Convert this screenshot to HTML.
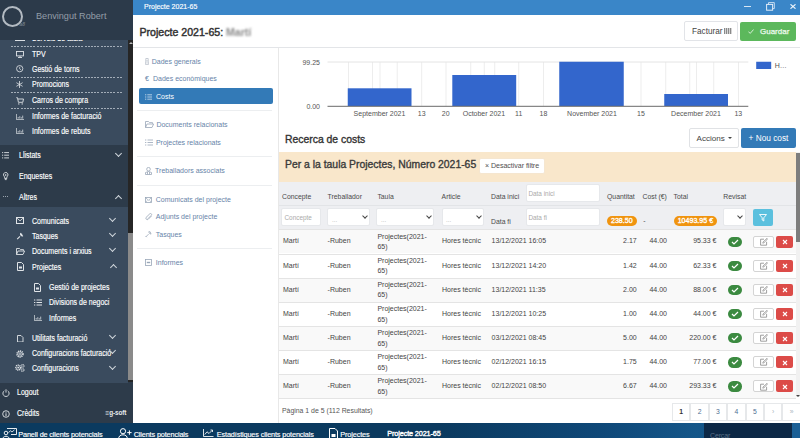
<!DOCTYPE html>
<html><head><meta charset="utf-8">
<style>
*{box-sizing:border-box;margin:0;padding:0}
html,body{width:800px;height:438px;overflow:hidden;background:#fff;font-family:"Liberation Sans",sans-serif;position:relative}
.a{position:absolute;white-space:nowrap}
/* sidebar */
#sb{position:absolute;left:0;top:0;width:133px;height:423px;background:#2d3b4a;overflow:hidden}
#sbh{position:absolute;left:0;top:0;width:133px;height:40px;background:#2c3a4a;z-index:2}
.light{position:absolute;left:0;width:128px;background:#3a4b5e}
.si{position:absolute;color:#fff;font-size:8.3px;-webkit-text-stroke:.15px #fff;white-space:nowrap;transform:translateY(-50%) scaleX(.845);transform-origin:0 50%}
.dash{position:absolute;left:11px;width:111px;height:1px;background:repeating-linear-gradient(90deg,#a3adb8 0 2px,transparent 2px 3.2px)}
.chev{position:absolute;margin-top:-1px;width:5px;height:5px;border-right:1.2px solid #d0d6dc;border-bottom:1.2px solid #d0d6dc;transform:rotate(45deg)}
.chevu{position:absolute;width:5px;height:5px;border-left:1.2px solid #d0d6dc;border-top:1.2px solid #d0d6dc;transform:rotate(45deg)}
/* content */
#tb{position:absolute;left:133px;top:0;width:667px;height:14.5px;background:#3a86c8}
.nav{position:absolute;margin-top:-0.5px;color:#6783a8;font-size:7px;white-space:nowrap;transform:translateY(-50%)}
.sep{position:absolute;left:137px;width:135px;height:1px;background:#eceef0}
.lbl{position:absolute;color:#555;font-size:6.4px;white-space:nowrap;transform:translateY(-50%)}
.hd{position:absolute;color:#4a4a4a;font-size:6.85px;white-space:nowrap;transform:translateY(-50%)}
.cell{position:absolute;color:#444;font-size:7px;white-space:nowrap;transform:translateY(-50%)}
.inp{position:absolute;background:#fff;border:1px solid #e6e8eb;border-radius:2px}
.row{position:absolute;left:279px;width:517px;border-top:1px solid #e4e4e4}
.chk{position:absolute;width:14px;height:10.4px;border-radius:5.2px;background:#3b8a40}
.edit{position:absolute;width:21px;height:11.8px;border:1px solid #d4d4d4;border-radius:2px;background:#fff}
.del{position:absolute;width:16.8px;height:11.8px;border-radius:2px;background:#dc4b48}
.pg{position:absolute;top:403.4px;height:17.6px;width:18.4px;border:1px solid #e6e8ea;margin-left:-1px;color:#4f6f94;font-size:6.8px;text-align:center;line-height:16px}
.tk{position:absolute;color:#fff;font-size:7.3px;letter-spacing:-0.14px;-webkit-text-stroke:.15px #fff;white-space:nowrap;transform:translateY(-50%)}
</style></head><body>

<!-- SIDEBAR -->
<div id="sb">
  <div class="light" style="top:40px;height:105px"></div>
  <div class="light" style="top:207px;height:175.5px"></div>
  <div id="sbh">
    <div class="a" style="left:2px;top:6px;width:21px;height:21px;border:2.2px solid #b3bac2;border-radius:50%"></div>
    <div class="a" style="left:19.5px;top:20.5px;color:#6f7a86;font-size:5px;font-style:italic;font-weight:bold">a8</div>
    <div class="a" style="left:36.4px;top:15.4px;color:#939da8;font-size:9.6px;transform:translateY(-50%) scaleX(.95);transform-origin:0 50%">Benvingut Robert</div>
  </div>
  <div class="dash" style="top:46px"></div>
  <div class="a" style="left:15px;top:39.6px;width:10px;height:1.4px;background:#d9dde2"></div>
  <div class="si" style="left:31.5px;top:38.3px">Serveis de taula</div>
  <!-- TPV -->
  <svg class="a" style="left:15.6px;top:50.5px" width="8" height="7" viewBox="0 0 8 7"><rect x=".5" y=".5" width="7" height="4.4" fill="none" stroke="#dfe3e7" stroke-width=".9"/><path d="M4 5V6.3M2 6.5H6" stroke="#dfe3e7" stroke-width=".9"/></svg>
  <div class="si" style="left:31.5px;top:53.5px">TPV</div>
  <svg class="a" style="left:16.2px;top:65.4px" width="7.4" height="7.4" viewBox="0 0 8 8"><circle cx="4" cy="4" r="3.4" fill="none" stroke="#dfe3e7" stroke-width=".9"/><path d="M4 2V4.2L5.3 5.2" fill="none" stroke="#dfe3e7" stroke-width=".8"/></svg>
  <div class="si" style="left:31.5px;top:69px">Gestió de torns</div>
  <div class="dash" style="top:77px"></div>
  <svg class="a" style="left:16.3px;top:81px" width="7" height="7" viewBox="0 0 7 7"><path d="M3.5 0V7M.4 1.7L6.6 5.3M.4 5.3L6.6 1.7" stroke="#dfe3e7" stroke-width=".8"/></svg>
  <div class="si" style="left:31.5px;top:84px">Promocions</div>
  <div class="dash" style="top:92px"></div>
  <svg class="a" style="left:15.8px;top:96.6px" width="8" height="8" viewBox="0 0 8 8"><path d="M.3 .7H1.5L2.4 5.3H6.8L7.5 2H1.8" fill="none" stroke="#dfe3e7" stroke-width=".9"/><circle cx="2.8" cy="6.9" r=".7" fill="#dfe3e7"/><circle cx="6.2" cy="6.9" r=".7" fill="#dfe3e7"/></svg>
  <div class="si" style="left:31.5px;top:100.4px">Carros de compra</div>
  <div class="dash" style="top:108px"></div>
  <svg class="a" style="left:15.8px;top:113.5px" width="8" height="6" viewBox="0 0 8 6"><path d="M.4 0V5.6H8M2.2 4.6V3M3.8 4.6V2.2M5.3 4.6V3.2M6.7 4.6V1.6" fill="none" stroke="#dfe3e7" stroke-width=".75"/></svg>
  <div class="si" style="left:31.5px;top:116.4px">Informes de facturació</div>
  <svg class="a" style="left:15.8px;top:128.3px" width="8" height="6" viewBox="0 0 8 6"><path d="M.4 0V5.6H8M2.2 4.6V3M3.8 4.6V2.2M5.3 4.6V3.2M6.7 4.6V1.6" fill="none" stroke="#dfe3e7" stroke-width=".75"/></svg>
  <div class="si" style="left:31.5px;top:131.2px">Informes de rebuts</div>
  <!-- dark section -->
  <svg class="a" style="left:1.8px;top:152px" width="7.5" height="6.5" viewBox="0 0 7.5 6.5"><path d="M0 .6H1.2M0 3.2H1.2M0 5.9H1.2M2.2 .6H7.5M2.2 3.2H7.5M2.2 5.9H7.5" fill="none" stroke="#dfe3e7" stroke-width=".9"/></svg>
  <div class="si" style="left:18.5px;top:155.2px">Llistats</div>
  <div class="chev" style="left:116px;top:151.5px"></div>
  <svg class="a" style="left:3.4px;top:172px" width="5.5" height="9" viewBox="0 0 5.5 9"><path d="M2.75 .5A2.2 2.2 0 0 1 4.4 4.2L3.8 5V6.5H1.7V5L1.1 4.2A2.2 2.2 0 0 1 2.75 .5ZM1.8 7.6H3.7M2.75 2V4" fill="none" stroke="#dfe3e7" stroke-width=".9"/></svg>
  <div class="si" style="left:18.5px;top:176.4px">Enquestes</div>
  <div class="a" style="left:3.4px;top:196px;width:5.5px;height:1px;background:repeating-linear-gradient(90deg,#9aa4ae 0 1px,transparent 1px 2.2px)"></div>
  <div class="si" style="left:18.5px;top:197px">Altres</div>
  <div class="chevu" style="left:116px;top:196px"></div>
  <!-- light submenu -->
  <svg class="a" style="left:16px;top:217px" width="8" height="7" viewBox="0 0 8 7"><rect x=".5" y=".5" width="7" height="6" fill="none" stroke="#dfe3e7" stroke-width="1"/><path d="M.5 .8L4 3.8L7.5 .8" fill="none" stroke="#dfe3e7" stroke-width=".9"/></svg>
  <div class="si" style="left:31.5px;top:220.6px">Comunicats</div>
  <div class="chev" style="left:110px;top:216.5px"></div>
  <svg class="a" style="left:16px;top:231.5px" width="8" height="8" viewBox="0 0 8 8"><path d="M1.2 7.2L4 4.4M4.6 1.4A2 2 0 0 0 6.6 4L5.6 3.2L5.8 2.2L4.8 1.8Z" fill="none" stroke="#dfe3e7" stroke-width="1.1" stroke-linejoin="round"/></svg>
  <div class="si" style="left:31.5px;top:235.9px">Tasques</div>
  <div class="chev" style="left:110px;top:231.5px"></div>
  <svg class="a" style="left:15.5px;top:247.5px" width="9" height="7" viewBox="0 0 9 7"><path d="M.5 6.5V.5H3.5L4.5 1.6H7.5V2.8M.5 6.5L2 3H8.6L7 6.5Z" fill="none" stroke="#dfe3e7" stroke-width=".9"/></svg>
  <div class="si" style="left:31.5px;top:251.2px">Documents i arxius</div>
  <div class="chev" style="left:110px;top:247px"></div>
  <svg class="a" style="left:17px;top:262px" width="7" height="9" viewBox="0 0 7 9"><path d="M.5 .5H4.5L6.5 2.5V8.5H.5Z" fill="none" stroke="#dfe3e7" stroke-width="1"/><rect x="2" y="4.5" width="3" height="2" fill="#dfe3e7"/></svg>
  <div class="si" style="left:31.5px;top:266.5px">Projectes</div>
  <div class="chevu" style="left:111px;top:265px"></div>
  <svg class="a" style="left:34px;top:282.5px" width="7" height="9" viewBox="0 0 7 9"><path d="M.5 .5H4.5L6.5 2.5V8.5H.5Z" fill="none" stroke="#dfe3e7" stroke-width="1"/><rect x="2" y="4.5" width="3" height="2" fill="#dfe3e7"/></svg>
  <div class="si" style="left:49px;top:287.1px">Gestió de projectes</div>
  <svg class="a" style="left:33.5px;top:298.5px" width="8" height="8" viewBox="0 0 8 8"><path d="M0 1H1.3M0 3.5H1.3M0 6H1.3M2.5 1H8M2.5 3.5H8M2.5 6H8" fill="none" stroke="#dfe3e7" stroke-width="1"/></svg>
  <div class="si" style="left:49px;top:302.3px">Divisions de negoci</div>
  <svg class="a" style="left:33.8px;top:314.6px" width="8" height="6" viewBox="0 0 8 6"><path d="M.4 0V5.6H8M2.2 4.6V3M3.8 4.6V2.2M5.3 4.6V3.2M6.7 4.6V1.6" fill="none" stroke="#dfe3e7" stroke-width=".75"/></svg>
  <div class="si" style="left:49px;top:317.5px">Informes</div>
  <svg class="a" style="left:17px;top:334.6px" width="6.5" height="7.5" viewBox="0 0 6.5 7.5"><path d="M.5 .5H4L6 2.5V7H.5Z" fill="none" stroke="#dfe3e7" stroke-width=".9"/></svg>
  <div class="si" style="left:31.5px;top:338.1px">Utilitats facturació</div>
  <div class="chev" style="left:110px;top:334px"></div>
  <svg class="a" style="left:16px;top:349.6px" width="8" height="8" viewBox="0 0 8 8"><circle cx="4" cy="4" r="3" fill="none" stroke="#dfe3e7" stroke-width="1.5" stroke-dasharray="1.2 .75"/><circle cx="4" cy="4" r="2.2" fill="none" stroke="#dfe3e7" stroke-width=".6"/><circle cx="4" cy="4" r="1" fill="none" stroke="#dfe3e7" stroke-width=".7"/></svg>
  <div class="si" style="left:31.5px;top:353.4px">Configuracions facturació</div>
  <div class="chev" style="left:110px;top:349px"></div>
  <svg class="a" style="left:14.8px;top:364.2px" width="10" height="8" viewBox="0 0 10 8"><circle cx="3.2" cy="3.6" r="2.3" fill="none" stroke="#dfe3e7" stroke-width="1.6" stroke-dasharray="1 .55"/><circle cx="3.2" cy="3.6" r=".9" fill="#dfe3e7"/><circle cx="7.6" cy="1.9" r="1.3" fill="none" stroke="#dfe3e7" stroke-width="1.2" stroke-dasharray=".7 .45"/><circle cx="7.6" cy="6" r="1.3" fill="none" stroke="#dfe3e7" stroke-width="1.2" stroke-dasharray=".7 .45"/></svg>
  <div class="si" style="left:31.5px;top:367.8px">Configuracions</div>
  <div class="chev" style="left:110px;top:365px"></div>
  <!-- scrollbar -->
  <div class="a" style="left:127.5px;top:40px;width:5.5px;height:342px;background:#262626"></div>
  <div class="a" style="left:128px;top:233px;width:5px;height:147px;background:#8a8a8a"></div>
  <div class="a" style="left:128.5px;top:42px;width:0;height:0;border-left:2px solid transparent;border-right:2px solid transparent;border-bottom:2px solid #bbb"></div>
  <!-- bottom -->
  <svg class="a" style="left:1.6px;top:389px" width="8" height="8" viewBox="0 0 8 8"><path d="M2.3 1.8A3.1 3.1 0 1 0 5.7 1.8M4 .3V3.6" fill="none" stroke="#dfe3e7" stroke-width=".9"/></svg>
  <div class="si" style="left:16.6px;top:392.1px">Logout</div>
  <svg class="a" style="left:1.6px;top:410px" width="8" height="8" viewBox="0 0 8 8"><circle cx="4" cy="4" r="3.3" fill="none" stroke="#dfe3e7" stroke-width=".9"/><path d="M4 3.3V6.2M4 1.8V2.6" fill="none" stroke="#dfe3e7" stroke-width="1"/></svg>
  <div class="si" style="left:16.6px;top:413.1px">Crèdits</div>
  <div class="a" style="left:105.5px;top:411.8px;color:#e6e9ec;font-size:6.4px;font-weight:bold;letter-spacing:-0.1px;transform:translateY(-50%)">&#x2261;g-soft</div>
</div>

<!-- TITLE BAR -->
<div id="tb">
  <div class="a" style="left:11px;top:6.2px;color:#fff;font-size:7px;-webkit-text-stroke:.15px #fff;transform:translateY(-50%)">Projecte 2021-65</div>
  <div class="a" style="left:611.2px;top:6px;width:6.4px;height:1px;background:#d6e6f5"></div>
  <svg class="a" style="left:632.5px;top:2px" width="9" height="9" viewBox="0 0 9 9"><path d="M2.5 2.3V.6H8.3V6.6H6.6" fill="none" stroke="#d6e6f5" stroke-width=".9"/><rect x=".6" y="2.4" width="6" height="5.8" fill="none" stroke="#e0ecf8" stroke-width="1"/></svg>
  <svg class="a" style="left:656.5px;top:3.8px" width="6" height="5" viewBox="0 0 6 5"><path d="M.5 .3L5.5 4.7M5.5 .3L.5 4.7" fill="none" stroke="#eef5fb" stroke-width="1.1"/></svg>
</div>
<!-- PAGE HEADER -->
<div class="a" style="left:139.5px;top:32.2px;color:#333;font-size:10.6px;-webkit-text-stroke:.45px #333;transform:translateY(-50%)">Projecte 2021-65:</div>
<div class="a" style="left:226px;top:32.2px;color:#8a8a8a;font-size:10.6px;font-weight:bold;filter:blur(1.1px);transform:translateY(-50%)">Martí</div>
<div class="a" style="left:684.3px;top:21.4px;width:53.3px;height:19.3px;border:1px solid #e2e4e8;border-radius:2px;background:#fff"></div>
<div class="a" style="left:692px;top:30.8px;color:#444;font-size:8.2px;transform:translateY(-50%)">Facturar</div>
<div class="a" style="left:724px;top:28.4px;width:7.5px;height:5.6px;background:repeating-linear-gradient(90deg,#8a8a8a 0 1.2px,#d5d5d5 1.2px 1.9px)"></div>
<div class="a" style="left:740.2px;top:21.6px;width:55.9px;height:19.2px;border-radius:2px;background:#5cb85c"></div>
<svg class="a" style="left:747.6px;top:28.5px" width="6" height="5" viewBox="0 0 6 5"><path d="M.4 2.6L2.2 4.4L5.6 .5" fill="none" stroke="#e3f5e3" stroke-width=".9"/></svg>
<div class="a" style="left:760px;top:30.8px;color:#eefaee;font-size:8px;-webkit-text-stroke:.25px #eefaee;transform:translateY(-50%)">Guardar</div>
<div class="a" style="left:133px;top:47px;width:667px;height:1px;background:#e3e5e8"></div>

<!-- LEFT NAV -->
<div class="a" style="left:278px;top:48px;width:1px;height:375px;background:#e8e8e8"></div>
<svg class="a" style="left:144.8px;top:58px" width="4" height="7" viewBox="0 0 4 7"><path d="M.8 .5H3.2V3H.8ZM.6 3.2V6.6H3.4V3.2M2 4.2V5.5" fill="none" stroke="#b0b8c4" stroke-width=".7"/></svg>
<div class="nav" style="left:151.75px;top:61.1px">Dades generals</div>
<div class="nav" style="left:145px;top:78.6px">&#x20AC;</div>
<div class="nav" style="left:153px;top:78.6px">Dades econòmiques</div>
<div class="a" style="left:139.2px;top:88.3px;width:133.5px;height:16px;background:#337ab7;border-radius:2px"></div>
<svg class="a" style="left:145.2px;top:93.5px" width="7" height="6" viewBox="0 0 7 6"><path d="M0 .8H1.3M0 3H1.3M0 5.2H1.3M2.3 .8H7M2.3 3H7M2.3 5.2H7" fill="none" stroke="#e8f0f8" stroke-width=".7"/></svg>
<div class="nav" style="left:156px;top:96.9px;color:#fff">Costs</div>
<div class="sep" style="top:109.7px"></div>
<svg class="a" style="left:144.5px;top:121px" width="9" height="7" viewBox="0 0 9 7"><path d="M.5 6.5V.5H3.5L4.5 1.6H7.5V2.8M.5 6.5L2 3H8.6L7 6.5Z" fill="none" stroke="#99a6b8" stroke-width=".8"/></svg>
<div class="nav" style="left:156.4px;top:124.7px">Documents relacionats</div>
<svg class="a" style="left:145px;top:138.5px" width="8" height="7" viewBox="0 0 8 7"><path d="M0 1H1.3M0 3.5H1.3M0 6H1.3M2.5 1H8M2.5 3.5H8M2.5 6H8" fill="none" stroke="#99a6b8" stroke-width=".8"/></svg>
<div class="nav" style="left:155.9px;top:142.1px">Projectes relacionats</div>
<div class="sep" style="top:156px"></div>
<svg class="a" style="left:145px;top:166.5px" width="7" height="8" viewBox="0 0 7 8"><circle cx="3.5" cy="2.2" r="1.8" fill="none" stroke="#99a6b8" stroke-width=".8"/><path d="M.5 7.5V5.5Q3.5 3.5 6.5 5.5V7.5ZM2.5 5V7.5M4.5 5V7.5" fill="none" stroke="#99a6b8" stroke-width=".8"/></svg>
<div class="nav" style="left:155.1px;top:170.6px">Treballadors associats</div>
<div class="sep" style="top:185px"></div>
<svg class="a" style="left:145.2px;top:196.8px" width="7" height="6" viewBox="0 0 7 6"><rect x=".45" y=".45" width="6.1" height="5.1" fill="none" stroke="#9aa7b8" stroke-width=".8"/><path d="M.6 .8L3.5 3.2L6.4 .8M.6 5.2L2.4 3.4M6.4 5.2L4.6 3.4" fill="none" stroke="#9aa7b8" stroke-width=".7"/></svg>
<div class="nav" style="left:155.8px;top:199.4px">Comunicats del projecte</div>
<svg class="a" style="left:145px;top:212.5px" width="8" height="8" viewBox="0 0 8 8"><path d="M6.5 3L3 6.5A1.5 1.5 0 0 1 1 4.5L4.8 .8A1 1 0 0 1 6.3 2.3L2.8 5.8" fill="none" stroke="#99a6b8" stroke-width=".8"/></svg>
<div class="nav" style="left:155.8px;top:216.5px">Adjunts del projecte</div>
<svg class="a" style="left:145px;top:230.3px" width="7.5" height="7.5" viewBox="0 0 8 8"><path d="M1 7.2L3.8 4.4M4.4 1.4A2 2 0 0 0 6.6 4.2L5.6 3.2L5.8 2.2L4.8 1.8Z" fill="none" stroke="#9aa7b8" stroke-width=".85" stroke-linejoin="round"/><path d="M.6 6.4L1.8 7.6" stroke="#9aa7b8" stroke-width=".8"/></svg>
<div class="nav" style="left:155.8px;top:234.1px">Tasques</div>
<div class="sep" style="top:248px"></div>
<svg class="a" style="left:145.2px;top:259px" width="7" height="7" viewBox="0 0 7 7"><rect x=".45" y=".45" width="6.1" height="6.1" fill="none" stroke="#9aa7b8" stroke-width=".8"/><path d="M1.8 3.5H5.2" stroke="#9aa7b8" stroke-width="1.4"/></svg>
<div class="nav" style="left:155.8px;top:262.2px">Informes</div>

<!-- CHART -->
<svg class="a" style="left:0;top:0" width="800" height="130" viewBox="0 0 800 130">
  <g font-family="Liberation Sans" font-size="7px" fill="#555">
  <line x1="348.5" y1="62" x2="348.5" y2="106" stroke="#ededed" stroke-width="1"/><line x1="372.5" y1="62" x2="372.5" y2="106" stroke="#ededed" stroke-width="1"/><line x1="380" y1="62" x2="380" y2="106" stroke="#ededed" stroke-width="1"/><line x1="397.2" y1="62" x2="397.2" y2="106" stroke="#ededed" stroke-width="1"/><line x1="421.7" y1="62" x2="421.7" y2="106" stroke="#ededed" stroke-width="1"/><line x1="446" y1="62" x2="446" y2="106" stroke="#ededed" stroke-width="1"/><line x1="470.75" y1="62" x2="470.75" y2="106" stroke="#ededed" stroke-width="1"/><line x1="484.25" y1="62" x2="484.25" y2="106" stroke="#ededed" stroke-width="1"/><line x1="494.75" y1="62" x2="494.75" y2="106" stroke="#ededed" stroke-width="1"/><line x1="518.75" y1="62" x2="518.75" y2="106" stroke="#ededed" stroke-width="1"/><line x1="543.5" y1="62" x2="543.5" y2="106" stroke="#ededed" stroke-width="1"/><line x1="567" y1="62" x2="567" y2="106" stroke="#ededed" stroke-width="1"/><line x1="590" y1="62" x2="590" y2="106" stroke="#ededed" stroke-width="1"/><line x1="599" y1="62" x2="599" y2="106" stroke="#ededed" stroke-width="1"/><line x1="641" y1="62" x2="641" y2="106" stroke="#ededed" stroke-width="1"/><line x1="665.75" y1="62" x2="665.75" y2="106" stroke="#ededed" stroke-width="1"/><line x1="689.75" y1="62" x2="689.75" y2="106" stroke="#ededed" stroke-width="1"/><line x1="696.5" y1="62" x2="696.5" y2="106" stroke="#ededed" stroke-width="1"/><line x1="713.75" y1="62" x2="713.75" y2="106" stroke="#ededed" stroke-width="1"/><line x1="738.5" y1="62" x2="738.5" y2="106" stroke="#ededed" stroke-width="1"/>
  <line x1="327.5" y1="62" x2="748.3" y2="62" stroke="#e4e4e4" stroke-width="1"/>
  <rect x="347.75" y="88.3" width="63.75" height="17.7" fill="#3366cc"/>
  <rect x="452.3" y="75" width="63.9" height="31" fill="#3366cc"/>
  <rect x="559.25" y="61.75" width="64.5" height="44.25" fill="#3366cc"/>
  <rect x="664.25" y="94" width="63.75" height="12" fill="#3366cc"/>
  <line x1="327.5" y1="106.3" x2="748.3" y2="106.3" stroke="#6a6a6a" stroke-width="1"/>
  <text x="320" y="64.9" text-anchor="end">99.25</text>
  <text x="320" y="108.9" text-anchor="end">0.00</text>
  <text x="379.5" y="116" text-anchor="middle">September 2021</text><text x="421.7" y="116" text-anchor="middle">13</text><text x="445.7" y="116" text-anchor="middle">20</text><text x="483.9" y="116" text-anchor="middle">October 2021</text><text x="518.75" y="116" text-anchor="middle">11</text><text x="543.5" y="116" text-anchor="middle">18</text><text x="592" y="116" text-anchor="middle">November 2021</text><text x="641" y="116" text-anchor="middle">15</text><text x="696" y="116" text-anchor="middle">December 2021</text><text x="738.3" y="116" text-anchor="middle">13</text>
  <rect x="756.2" y="61.75" width="15" height="7.25" fill="#3366cc"/>
  <text x="774.8" y="68">H&#x2026;</text>
  </g>
</svg>
<!-- RECERCA -->
<div class="a" style="left:285px;top:139.4px;color:#333;font-size:10.4px;-webkit-text-stroke:.35px #333;transform:translateY(-50%)">Recerca de costs</div>
<div class="a" style="left:689px;top:128.4px;width:50px;height:19.6px;border:1px solid #e0e2e5;border-radius:2px;background:#fff"></div>
<div class="a" style="left:696.5px;top:138.2px;color:#444;font-size:8.1px;transform:translateY(-50%)">Accions</div>
<div class="a" style="left:728px;top:137px;width:0;height:0;border-left:2px solid transparent;border-right:2px solid transparent;border-top:2.5px solid #444"></div>
<div class="a" style="left:741.4px;top:128.4px;width:54.6px;height:19.6px;border-radius:2px;background:#337ab7"></div>
<div class="a" style="left:748.5px;top:138.2px;color:#fff;font-size:8.3px;transform:translateY(-50%)">+ Nou cost</div>
<!-- scrollbar right -->
<div class="a" style="left:796px;top:152px;width:4px;height:245px;background:#f1f1f1"></div>
<div class="a" style="left:796.3px;top:153px;width:3.7px;height:88.5px;background:#7d7d7d"></div>
<div class="a" style="left:796px;top:395px;width:0;height:0;border-left:2px solid transparent;border-right:2px solid transparent;border-top:2.5px solid #444"></div>
<!-- yellow band -->
<div class="a" style="left:279px;top:152.2px;width:517px;height:29.5px;background:#f9e7cb"></div>
<div class="a" style="left:285px;top:164.4px;color:#3a3a3a;font-size:10.4px;-webkit-text-stroke:.35px #3a3a3a;transform:translateY(-50%)">Per a la taula Projectes, Número 2021-65</div>
<div class="a" style="left:479px;top:157.9px;width:65.8px;height:16.3px;background:#fff;border-radius:2px;border:1px solid #f5e6d0"></div>
<div class="a" style="left:485px;top:165.7px;color:#505050;font-size:7.1px;letter-spacing:-0.05px;transform:translateY(-50%)">&#xD7; Desactivar filtre</div>
<!-- table header -->
<div class="a" style="left:279px;top:181.7px;width:517px;height:47.8px;background:#eeeff2"></div>
<div class="a" style="left:279px;top:204.5px;width:517px;height:1px;background:#e2e4e7"></div>
<div class="hd" style="left:282px;top:196.4px">Concepte</div>
<div class="hd" style="left:327.6px;top:196.4px">Treballador</div>
<div class="hd" style="left:377.4px;top:196.4px">Taula</div>
<div class="hd" style="left:441.6px;top:196.4px">Article</div>
<div class="hd" style="left:491px;top:196.4px">Data inici</div>
<div class="hd" style="left:607px;top:196.4px">Quantitat</div>
<div class="hd" style="left:642.5px;top:196.4px">Cost (&#x20AC;)</div>
<div class="hd" style="left:673.5px;top:196.4px">Total</div>
<div class="hd" style="left:723.3px;top:196.4px">Revisat</div>
<div class="inp" style="left:525.6px;top:184px;width:74.4px;height:17.6px"></div>
<div class="lbl" style="left:528.4px;top:193px;color:#aaa">Data inici</div>
<div class="hd" style="left:491px;top:221px">Data fi</div>
<div class="inp" style="left:525.6px;top:208px;width:74.4px;height:17.6px"></div>
<div class="lbl" style="left:528.4px;top:217.4px;color:#aaa">Data fi</div>
<div class="inp" style="left:281px;top:208px;width:39.6px;height:17.6px"></div>
<div class="lbl" style="left:284.5px;top:217.4px;color:#aaa">Concepte</div>
<div class="inp" style="left:327px;top:208px;width:43px;height:17.6px"></div>
<div class="lbl" style="left:332px;top:218.5px;color:#bbb">...</div>
<div class="chev" style="left:362.5px;top:214.8px;border-color:#444;width:4px;height:4px"></div>
<div class="inp" style="left:376px;top:208px;width:58px;height:17.6px"></div>
<div class="lbl" style="left:381px;top:218.5px;color:#bbb">...</div>
<div class="chev" style="left:426.5px;top:214.8px;border-color:#444;width:4px;height:4px"></div>
<div class="inp" style="left:441.6px;top:208px;width:42.4px;height:17.6px"></div>
<div class="lbl" style="left:446px;top:218.5px;color:#bbb">...</div>
<div class="chev" style="left:476.5px;top:214.8px;border-color:#444;width:4px;height:4px"></div>
<div class="a" style="left:606.5px;top:216px;width:30.7px;height:9.8px;border-radius:5px;background:#f0940f;color:#fff;font-size:7.1px;-webkit-text-stroke:.3px #fff;text-align:center;line-height:10.8px">238.50</div>
<div class="hd" style="left:643.3px;top:219.7px">-</div>
<div class="a" style="left:673.5px;top:216px;width:43.8px;height:9.8px;border-radius:5px;background:#f0940f;color:#fff;font-size:7.1px;-webkit-text-stroke:.3px #fff;text-align:center;line-height:10.8px">10493.95 &#x20AC;</div>
<div class="inp" style="left:723px;top:208.2px;width:23px;height:17.6px"></div>
<div class="chev" style="left:737.5px;top:214.8px;border-color:#444;width:4px;height:4px"></div>
<div class="a" style="left:752.7px;top:209px;width:20.3px;height:16.8px;border-radius:2px;background:#5bc0de"></div>
<svg class="a" style="left:759px;top:213.5px" width="8" height="8" viewBox="0 0 8 8"><path d="M.5 .5H7.5L4.8 3.8V7L3.2 6V3.8Z" fill="none" stroke="#fff" stroke-width=".9"/></svg>

<!-- ROWS -->
<div class="row" style="top:229.40px;height:24.1px;background:#f9f9f9"></div>
<div class="cell" style="left:283px;top:240.40px">Martí</div>
<div class="cell" style="left:327.6px;top:240.40px">-Ruben</div>
<div class="cell" style="left:377.4px;top:235.60px">Projectes(2021-</div>
<div class="cell" style="left:377.4px;top:246.20px">65)</div>
<div class="cell" style="left:442px;top:240.40px">Hores tècnic</div>
<div class="cell" style="left:491.6px;top:240.40px">13/12/2021 16:05</div>
<div class="cell" style="right:163.30px;top:240.40px">2.17</div>
<div class="cell" style="right:133.00px;top:240.40px">44.00</div>
<div class="cell" style="right:83.50px;top:240.40px">95.33 €</div>
<div class="chk" style="left:727.8px;top:236.70px"></div>
<svg class="a" style="left:731px;top:238.70px" width="8" height="6" viewBox="0 0 8 6"><path d="M1 3L3 5L7 1" fill="none" stroke="#fff" stroke-width="1.2"/></svg>
<div class="edit" style="left:753.3px;top:235.80px"></div>
<svg class="a" style="left:760px;top:237.90px" width="8" height="8" viewBox="0 0 8 8"><path d="M4 1.2H.6V7.2H6.6V3.8" fill="none" stroke="#888" stroke-width=".8"/><path d="M2.8 5.2L3 4L7 .3L7.6 .9L3.8 5Z" fill="none" stroke="#888" stroke-width=".7"/></svg>
<div class="del" style="left:776.4px;top:235.80px"></div>
<svg class="a" style="left:781.5px;top:239.10px" width="6" height="6" viewBox="0 0 6 6"><path d="M1 1L5 5M5 1L1 5" fill="none" stroke="#fff" stroke-width="1.1"/></svg>
<div class="row" style="top:253.50px;height:24.1px;background:#fff"></div>
<div class="cell" style="left:283px;top:264.50px">Martí</div>
<div class="cell" style="left:327.6px;top:264.50px">-Ruben</div>
<div class="cell" style="left:377.4px;top:259.70px">Projectes(2021-</div>
<div class="cell" style="left:377.4px;top:270.30px">65)</div>
<div class="cell" style="left:442px;top:264.50px">Hores tècnic</div>
<div class="cell" style="left:491.6px;top:264.50px">13/12/2021 14:20</div>
<div class="cell" style="right:163.30px;top:264.50px">1.42</div>
<div class="cell" style="right:133.00px;top:264.50px">44.00</div>
<div class="cell" style="right:83.50px;top:264.50px">62.33 €</div>
<div class="chk" style="left:727.8px;top:260.80px"></div>
<svg class="a" style="left:731px;top:262.80px" width="8" height="6" viewBox="0 0 8 6"><path d="M1 3L3 5L7 1" fill="none" stroke="#fff" stroke-width="1.2"/></svg>
<div class="edit" style="left:753.3px;top:259.90px"></div>
<svg class="a" style="left:760px;top:262.00px" width="8" height="8" viewBox="0 0 8 8"><path d="M4 1.2H.6V7.2H6.6V3.8" fill="none" stroke="#888" stroke-width=".8"/><path d="M2.8 5.2L3 4L7 .3L7.6 .9L3.8 5Z" fill="none" stroke="#888" stroke-width=".7"/></svg>
<div class="del" style="left:776.4px;top:259.90px"></div>
<svg class="a" style="left:781.5px;top:263.20px" width="6" height="6" viewBox="0 0 6 6"><path d="M1 1L5 5M5 1L1 5" fill="none" stroke="#fff" stroke-width="1.1"/></svg>
<div class="row" style="top:277.60px;height:24.1px;background:#f9f9f9"></div>
<div class="cell" style="left:283px;top:288.60px">Martí</div>
<div class="cell" style="left:327.6px;top:288.60px">-Ruben</div>
<div class="cell" style="left:377.4px;top:283.80px">Projectes(2021-</div>
<div class="cell" style="left:377.4px;top:294.40px">65)</div>
<div class="cell" style="left:442px;top:288.60px">Hores tècnic</div>
<div class="cell" style="left:491.6px;top:288.60px">13/12/2021 11:35</div>
<div class="cell" style="right:163.30px;top:288.60px">2.00</div>
<div class="cell" style="right:133.00px;top:288.60px">44.00</div>
<div class="cell" style="right:83.50px;top:288.60px">88.00 €</div>
<div class="chk" style="left:727.8px;top:284.90px"></div>
<svg class="a" style="left:731px;top:286.90px" width="8" height="6" viewBox="0 0 8 6"><path d="M1 3L3 5L7 1" fill="none" stroke="#fff" stroke-width="1.2"/></svg>
<div class="edit" style="left:753.3px;top:284.00px"></div>
<svg class="a" style="left:760px;top:286.10px" width="8" height="8" viewBox="0 0 8 8"><path d="M4 1.2H.6V7.2H6.6V3.8" fill="none" stroke="#888" stroke-width=".8"/><path d="M2.8 5.2L3 4L7 .3L7.6 .9L3.8 5Z" fill="none" stroke="#888" stroke-width=".7"/></svg>
<div class="del" style="left:776.4px;top:284.00px"></div>
<svg class="a" style="left:781.5px;top:287.30px" width="6" height="6" viewBox="0 0 6 6"><path d="M1 1L5 5M5 1L1 5" fill="none" stroke="#fff" stroke-width="1.1"/></svg>
<div class="row" style="top:301.70px;height:24.1px;background:#fff"></div>
<div class="cell" style="left:283px;top:312.70px">Martí</div>
<div class="cell" style="left:327.6px;top:312.70px">-Ruben</div>
<div class="cell" style="left:377.4px;top:307.90px">Projectes(2021-</div>
<div class="cell" style="left:377.4px;top:318.50px">65)</div>
<div class="cell" style="left:442px;top:312.70px">Hores tècnic</div>
<div class="cell" style="left:491.6px;top:312.70px">13/12/2021 10:25</div>
<div class="cell" style="right:163.30px;top:312.70px">1.00</div>
<div class="cell" style="right:133.00px;top:312.70px">44.00</div>
<div class="cell" style="right:83.50px;top:312.70px">44.00 €</div>
<div class="chk" style="left:727.8px;top:309.00px"></div>
<svg class="a" style="left:731px;top:311.00px" width="8" height="6" viewBox="0 0 8 6"><path d="M1 3L3 5L7 1" fill="none" stroke="#fff" stroke-width="1.2"/></svg>
<div class="edit" style="left:753.3px;top:308.10px"></div>
<svg class="a" style="left:760px;top:310.20px" width="8" height="8" viewBox="0 0 8 8"><path d="M4 1.2H.6V7.2H6.6V3.8" fill="none" stroke="#888" stroke-width=".8"/><path d="M2.8 5.2L3 4L7 .3L7.6 .9L3.8 5Z" fill="none" stroke="#888" stroke-width=".7"/></svg>
<div class="del" style="left:776.4px;top:308.10px"></div>
<svg class="a" style="left:781.5px;top:311.40px" width="6" height="6" viewBox="0 0 6 6"><path d="M1 1L5 5M5 1L1 5" fill="none" stroke="#fff" stroke-width="1.1"/></svg>
<div class="row" style="top:325.80px;height:24.1px;background:#f9f9f9"></div>
<div class="cell" style="left:283px;top:336.80px">Martí</div>
<div class="cell" style="left:327.6px;top:336.80px">-Ruben</div>
<div class="cell" style="left:377.4px;top:332.00px">Projectes(2021-</div>
<div class="cell" style="left:377.4px;top:342.60px">65)</div>
<div class="cell" style="left:442px;top:336.80px">Hores tècnic</div>
<div class="cell" style="left:491.6px;top:336.80px">03/12/2021 08:45</div>
<div class="cell" style="right:163.30px;top:336.80px">5.00</div>
<div class="cell" style="right:133.00px;top:336.80px">44.00</div>
<div class="cell" style="right:83.50px;top:336.80px">220.00 €</div>
<div class="chk" style="left:727.8px;top:333.10px"></div>
<svg class="a" style="left:731px;top:335.10px" width="8" height="6" viewBox="0 0 8 6"><path d="M1 3L3 5L7 1" fill="none" stroke="#fff" stroke-width="1.2"/></svg>
<div class="edit" style="left:753.3px;top:332.20px"></div>
<svg class="a" style="left:760px;top:334.30px" width="8" height="8" viewBox="0 0 8 8"><path d="M4 1.2H.6V7.2H6.6V3.8" fill="none" stroke="#888" stroke-width=".8"/><path d="M2.8 5.2L3 4L7 .3L7.6 .9L3.8 5Z" fill="none" stroke="#888" stroke-width=".7"/></svg>
<div class="del" style="left:776.4px;top:332.20px"></div>
<svg class="a" style="left:781.5px;top:335.50px" width="6" height="6" viewBox="0 0 6 6"><path d="M1 1L5 5M5 1L1 5" fill="none" stroke="#fff" stroke-width="1.1"/></svg>
<div class="row" style="top:349.90px;height:24.1px;background:#fff"></div>
<div class="cell" style="left:283px;top:360.90px">Martí</div>
<div class="cell" style="left:327.6px;top:360.90px">-Ruben</div>
<div class="cell" style="left:377.4px;top:356.10px">Projectes(2021-</div>
<div class="cell" style="left:377.4px;top:366.70px">65)</div>
<div class="cell" style="left:442px;top:360.90px">Hores tècnic</div>
<div class="cell" style="left:491.6px;top:360.90px">02/12/2021 16:15</div>
<div class="cell" style="right:163.30px;top:360.90px">1.75</div>
<div class="cell" style="right:133.00px;top:360.90px">44.00</div>
<div class="cell" style="right:83.50px;top:360.90px">77.00 €</div>
<div class="chk" style="left:727.8px;top:357.20px"></div>
<svg class="a" style="left:731px;top:359.20px" width="8" height="6" viewBox="0 0 8 6"><path d="M1 3L3 5L7 1" fill="none" stroke="#fff" stroke-width="1.2"/></svg>
<div class="edit" style="left:753.3px;top:356.30px"></div>
<svg class="a" style="left:760px;top:358.40px" width="8" height="8" viewBox="0 0 8 8"><path d="M4 1.2H.6V7.2H6.6V3.8" fill="none" stroke="#888" stroke-width=".8"/><path d="M2.8 5.2L3 4L7 .3L7.6 .9L3.8 5Z" fill="none" stroke="#888" stroke-width=".7"/></svg>
<div class="del" style="left:776.4px;top:356.30px"></div>
<svg class="a" style="left:781.5px;top:359.60px" width="6" height="6" viewBox="0 0 6 6"><path d="M1 1L5 5M5 1L1 5" fill="none" stroke="#fff" stroke-width="1.1"/></svg>
<div class="row" style="top:374.00px;height:24.1px;background:#f9f9f9"></div>
<div class="cell" style="left:283px;top:385.00px">Martí</div>
<div class="cell" style="left:327.6px;top:385.00px">-Ruben</div>
<div class="cell" style="left:377.4px;top:380.20px">Projectes(2021-</div>
<div class="cell" style="left:377.4px;top:390.80px">65)</div>
<div class="cell" style="left:442px;top:385.00px">Hores tècnic</div>
<div class="cell" style="left:491.6px;top:385.00px">02/12/2021 08:50</div>
<div class="cell" style="right:163.30px;top:385.00px">6.67</div>
<div class="cell" style="right:133.00px;top:385.00px">44.00</div>
<div class="cell" style="right:83.50px;top:385.00px">293.33 €</div>
<div class="chk" style="left:727.8px;top:381.30px"></div>
<svg class="a" style="left:731px;top:383.30px" width="8" height="6" viewBox="0 0 8 6"><path d="M1 3L3 5L7 1" fill="none" stroke="#fff" stroke-width="1.2"/></svg>
<div class="edit" style="left:753.3px;top:380.40px"></div>
<svg class="a" style="left:760px;top:382.50px" width="8" height="8" viewBox="0 0 8 8"><path d="M4 1.2H.6V7.2H6.6V3.8" fill="none" stroke="#888" stroke-width=".8"/><path d="M2.8 5.2L3 4L7 .3L7.6 .9L3.8 5Z" fill="none" stroke="#888" stroke-width=".7"/></svg>
<div class="del" style="left:776.4px;top:380.40px"></div>
<svg class="a" style="left:781.5px;top:383.70px" width="6" height="6" viewBox="0 0 6 6"><path d="M1 1L5 5M5 1L1 5" fill="none" stroke="#fff" stroke-width="1.1"/></svg>
<div class="a" style="left:279px;top:398.10px;width:517px;height:1px;background:#e4e4e4"></div>
<!-- PAGINATION -->
<div class="a" style="left:282px;top:409.8px;color:#555;font-size:6.9px;transform:translateY(-50%)">Pàgina 1 de 5 (112 Resultats)</div>
<div class="pg" style="left:673px;color:#333;background:#fff;font-weight:bold">1</div>
<div class="pg" style="left:691.4px">2</div>
<div class="pg" style="left:709.8px">3</div>
<div class="pg" style="left:728.2px">4</div>
<div class="pg" style="left:746.6px">5</div>
<div class="pg" style="left:765px;color:#aab4c0">&#x203A;</div>
<div class="pg" style="left:783.4px;color:#aab4c0">&#xBB;</div>
<!-- TASKBAR -->
<div class="a" style="left:0;top:422.6px;width:800px;height:16px;background:linear-gradient(90deg,#0b3a5f 0%,#0b3a5f 55%,#0f4878 75%,#145689 87%,#0e4a7a 100%)"></div>
<div class="a" style="left:704.4px;top:422.6px;width:88px;height:16px;background:#0c2846"></div>
<div class="a" style="left:792.4px;top:422.6px;width:8px;height:16px;background:#1a5f95"></div>
<div class="tk" style="left:710px;top:434.5px;color:#5d7288;font-size:7px;-webkit-text-stroke:0">Cercar</div>
<svg class="a" style="left:2px;top:427.5px" width="15" height="11" viewBox="0 0 15 11"><path d="M5 .5H14.5V6.5H9" fill="none" stroke="#fff" stroke-width=".9"/><path d="M6.5 4.5L8.5 2.8L10 4L12.5 1.8" fill="none" stroke="#fff" stroke-width=".8"/><circle cx="4" cy="5" r="1.8" fill="none" stroke="#fff" stroke-width=".9"/><path d="M.6 11V10Q4 6.5 7.4 10V11" fill="none" stroke="#fff" stroke-width=".9"/></svg>
<div class="tk" style="left:18.3px;top:433.7px">Panell de clients potencials</div>
<svg class="a" style="left:117.5px;top:427.5px" width="15" height="11" viewBox="0 0 15 11"><circle cx="5" cy="3.2" r="2.6" fill="none" stroke="#fff" stroke-width="1"/><path d="M.6 11Q.8 6.8 5 6.8Q9.2 6.8 9.4 11M9.2 4.6H13.6M11.4 2.4V6.8" fill="none" stroke="#fff" stroke-width="1"/></svg>
<div class="tk" style="left:133.7px;top:433.7px">Clients potencials</div>
<svg class="a" style="left:203px;top:429.3px" width="11" height="8" viewBox="0 0 11 8"><path d="M.5 0V7.5H10.5M1.8 5.5L4 2.8L6 4.5L9 1.5M7.5 1H9.5V3" fill="none" stroke="#fff" stroke-width=".85"/></svg>
<div class="tk" style="left:216.8px;top:433.7px">Estadístiques clients potencials</div>
<svg class="a" style="left:328.75px;top:427.5px" width="9" height="12" viewBox="0 0 9 12"><path d="M.5 .5H6L8.5 3V11.5H.5Z" fill="none" stroke="#fff" stroke-width="1"/><rect x="2.5" y="6" width="4" height="3" fill="#fff"/></svg>
<div class="tk" style="left:340.3px;top:433.5px">Projectes</div>
<div class="tk" style="left:387.3px;top:433.3px;-webkit-text-stroke:.35px #fff">Projecte 2021-65</div>

</body></html>
